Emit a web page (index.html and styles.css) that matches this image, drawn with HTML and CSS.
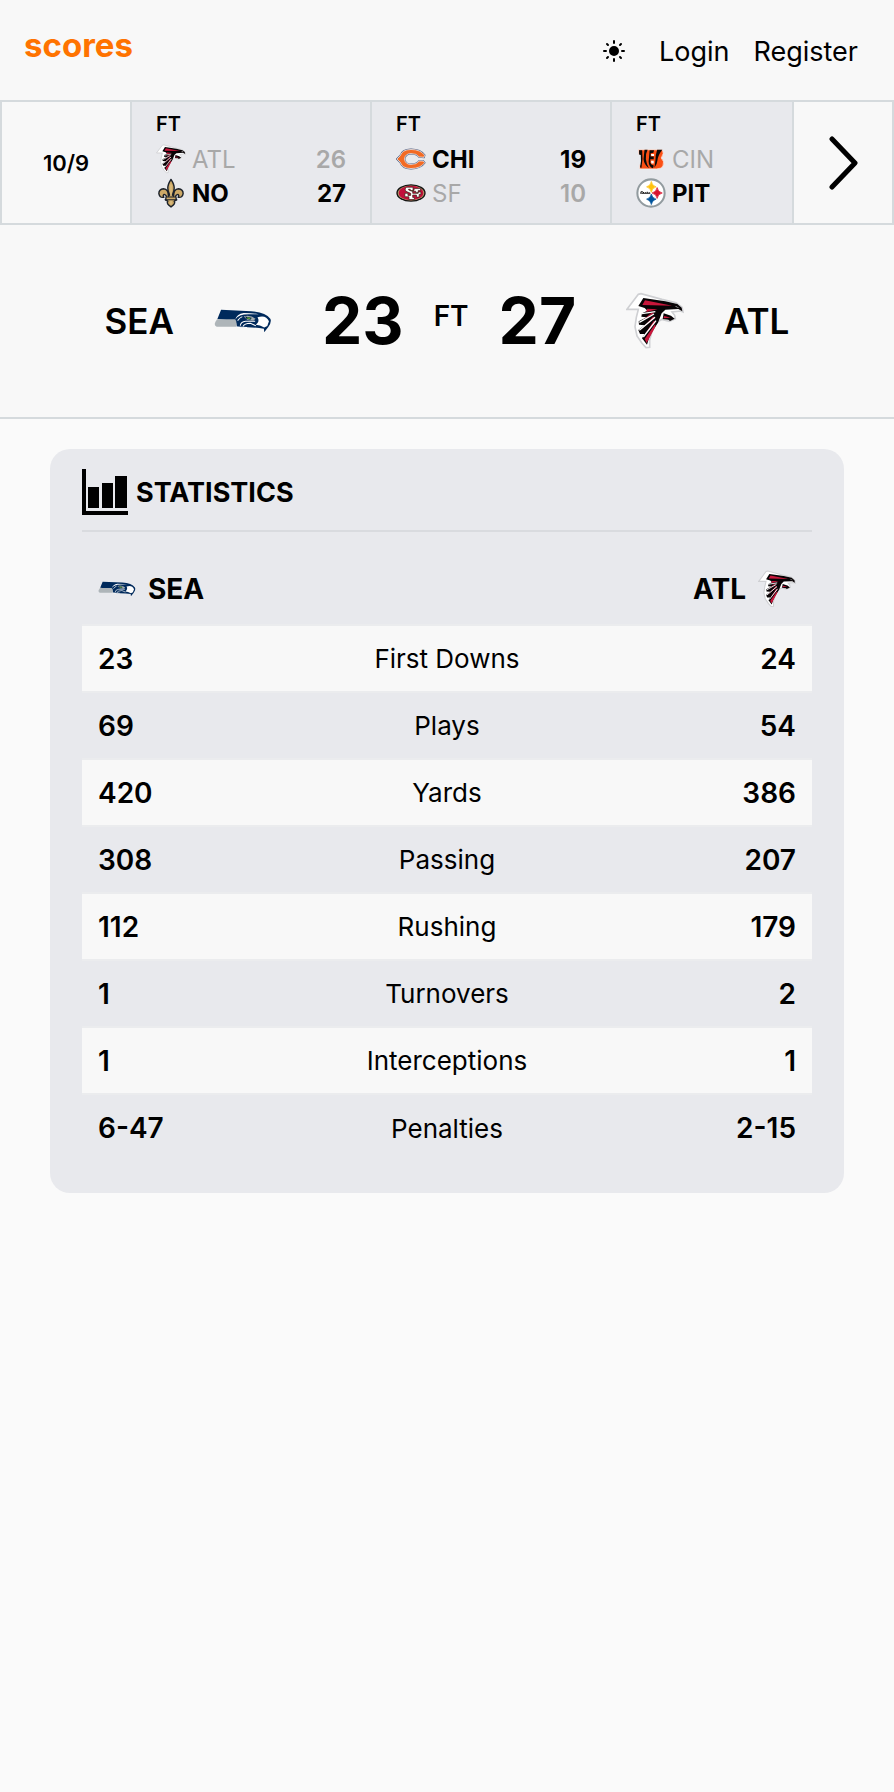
FILE: index.html
```html
<!DOCTYPE html>
<html lang="en">
<head>
<meta charset="utf-8">
<meta name="viewport" content="width=device-width, initial-scale=1">
<title>scores</title>
<link rel="stylesheet" href="styles.css">
</head>
<body>
<svg class="defs" aria-hidden="true">
  <symbol id="falcons" viewBox="20 18 174 170">
    <path d="M23 68 57 23 65 21 128 38 170 48 188 62 191 76 184 73 158 76 166 86 168 96 150 104 128 98 112 108 98 134 91 160 91 182 80 183 68 170 53 148 47 120 51 92 57 68Z" fill="#fff" stroke="#cfd0d3" stroke-width="5"/>
    <path d="M72 34 138 44 174 52 187 63 189 74 177 67 138 69 127 80 116 108 99 134 89 154 83 174 68 155 76 142 62 142 57 130 76 116 59 114 58 104 82 92 66 90 68 80 84 72 76 64 57 58Z" fill="#080406"/>
    <path d="m77 41 82 16-90-2ZM83 66l32 2-34 8ZM97 78l8 0-38 25ZM101 90l7 1-43 38ZM103 103l6 2-33 39ZM107 113l2 6-27 50-6-12Z" fill="#c8173b"/>
    <path d="M68 81 108 75M60 107 104 82M60 131 107 92M72 151 110 102" stroke="#fff" stroke-width="4"/>
    <path d="m133 80 22 7 11 9-14 7-5-4-17-2Z" fill="#080406"/>
    <path d="m135 88 19 5-22 2Z" fill="#c8173b"/>
    <path d="m166 57 14 6-8-1Z" fill="#fff"/>
  </symbol>
  <symbol id="seahawks" viewBox="402 113 172 74">
    <path d="M423 117 512 121Q555 124 569 143 574 152 563 168L551 183 550 173Q525 168 490 169L470 167 466 150 412 144Z" fill="#002a5c"/>
    <path d="M411 145 464 145Q471 149 468 167L410 167Q401 163 406 153Z" fill="#aeb5b9"/>
    <path d="M465 146Q475 128 512 130L535 130Q514 126 490 126 469 129 465 146Z" fill="#fff"/>
    <path d="M531 139Q556 130 565 151L560 165 551 169Q538 162 526 161 539 151 531 139Z" fill="#fff"/>
    <path d="M472 149Q479 139 486 137M480 164Q481 153 496 151L524 151M488 166Q492 158 510 157L526 164M470 168 500 169" fill="none" stroke="#fff" stroke-width="3"/>
    <path d="M490 136Q510 131 525 143L519 149 501 147Z" fill="#a5acaf"/>
    <path d="m494 137 20 3-4 6-11-2Z" fill="#002244"/>
    <path d="m500 139 11 2-3 3-7-1Z" fill="#62b22f"/>
  </symbol>
  <symbol id="saints" viewBox="0 0 76 84">
    <g stroke="#1c222b" stroke-width="4" stroke-linejoin="round" fill="#cda967">
      <path d="M38 4Q29 18 29 28 29 36 34 47L31 51Q31 31 17 30 4 31 4 44 6 56 18 54 14 49 19 46 27 48 25 57L22 61 29 65Q24 72 38 81 52 72 47 65L54 61 51 57Q49 48 57 46 62 49 58 54 70 56 72 44 72 31 59 30 45 31 45 51L42 47Q47 36 47 28 47 18 38 4Z"/>
      <path d="M24 53H52V61H24Z" stroke-width="3"/>
    </g>
    <path d="M38 18V48M38 64V74" stroke="#e2c78c" stroke-width="3"/>
  </symbol>
  <symbol id="bears" viewBox="0 0 88 64">
    <path d="M84 21Q72 4 44 4 18 4 12 23L3 32 12 41Q18 60 44 60 72 60 84 43L80 38 68 38Q61 48 44 48 27 48 25 32 27 16 44 16 61 16 68 26L82 27Z" fill="#f26a24" stroke="#4b587b" stroke-width="5"/>
    <path d="M84 21Q72 4 44 4 18 4 12 23L3 32 12 41Q18 60 44 60 72 60 84 43L80 38 68 38Q61 48 44 48 27 48 25 32 27 16 44 16 61 16 68 26L82 27Z" fill="#f26a24" stroke="#fff" stroke-width="2"/>
  </symbol>
  <symbol id="niners" viewBox="0 0 88 54">
    <ellipse cx="44" cy="27" rx="43" ry="26" fill="#111"/>
    <ellipse cx="44" cy="27" rx="39" ry="22" fill="#b49b69"/>
    <ellipse cx="44" cy="27" rx="36" ry="21" fill="#c20f3c"/>
    <path d="M50 10H30Q24 15 29 22L43 28V34H35V28H26V38H38V46H54V40H49V33H60V39H68V31H73V24H65V28H49V22H58V26H65V20H72V14H53V19L48 22 37 18V16H42V20H50Z" fill="#fff" stroke="#321" stroke-width="2"/>
  </symbol>
  <symbol id="bengals" viewBox="-4 0 88 62">
    <path d="M3 4H73Q80 14 70 28 81 38 75 52 70 60 56 60H7V48H11V17H4Z" fill="#fb4f14" stroke="#f7f2ef" stroke-width="2"/>
    <path d="M5 5 14 5Q17 28 12 57L8 56Q12 34 10 19L5 18ZM21 4H30Q23 17 25 32 27 48 34 58 20 49 18 32ZM36 5H49L47 13 39 14V24H48V32H38V42Q40 49 48 50L46 58Q34 55 33 39ZM58 4H73Q60 21 59 35 58 47 50 57L53 35Q53 19 58 4Z" fill="#0a0a0a"/>
    <path d="M40 16H49V22H41ZM40 36H48V44H41Z" fill="#fff"/>
  </symbol>
  <symbol id="steelers" viewBox="0 0 88 88">
    <circle cx="44" cy="44" r="40" fill="#fff" stroke="#929b9f" stroke-width="6"/>
    <path d="M45 10Q47 23 59 26 47 29 45 42 43 29 31 26 43 23 45 10Z" fill="#ffc20e" stroke="#ffc20e" stroke-width="2"/>
    <path d="M62 28Q64 41 77 44 64 47 62 60 60 47 47 44 60 41 62 28Z" fill="#d8142f" stroke="#d8142f" stroke-width="2"/>
    <path d="M45 47Q47 59 59 62 47 65 45 78 43 65 31 62 43 59 45 47Z" fill="#00539b" stroke="#00539b" stroke-width="2"/>
    <path d="M14 40H20M16 45H42M14 42V46M22 41V46M28 42V46M33 40V46M39 42V46" stroke="#111" stroke-width="3"/>
  </symbol>
</svg>

<header class="site-header">
  <a class="brand" href="#">scores</a>
  <nav class="site-nav">
    <button class="theme-toggle" type="button" aria-label="Toggle theme">
      <svg class="sun" viewBox="0 0 22 22"><circle cx="11" cy="11" r="4"/><path d="M11 1V3M11 19V21M1 11H3M19 11H21M4 4 5 5M17 17 18 18M4 18 5 17M17 5 18 4"/></svg>
    </button>
    <a href="#">Login</a>
    <a href="#">Register</a>
  </nav>
</header>

<section class="ticker">
  <div class="ticker-date">10/9</div>
  <div class="ticker-games">
    <a class="game" href="#">
      <span class="game-status">FT</span>
      <span class="game-team loser"><svg class="game-logo"><use href="#falcons"/></svg><span class="game-name">ATL</span><span class="game-score">26</span></span>
      <span class="game-team"><svg class="game-logo"><use href="#saints"/></svg><span class="game-name">NO</span><span class="game-score">27</span></span>
    </a>
    <a class="game" href="#">
      <span class="game-status">FT</span>
      <span class="game-team"><svg class="game-logo"><use href="#bears"/></svg><span class="game-name">CHI</span><span class="game-score">19</span></span>
      <span class="game-team loser"><svg class="game-logo"><use href="#niners"/></svg><span class="game-name">SF</span><span class="game-score">10</span></span>
    </a>
    <a class="game" href="#">
      <span class="game-status">FT</span>
      <span class="game-team loser"><svg class="game-logo"><use href="#bengals"/></svg><span class="game-name">CIN</span></span>
      <span class="game-team"><svg class="game-logo"><use href="#steelers"/></svg><span class="game-name">PIT</span></span>
    </a>
  </div>
  <button class="ticker-next" type="button" aria-label="Next games">
    <svg class="chevron" viewBox="0 0 30 54"><path d="M4 3 27 27 4 51"/></svg>
  </button>
</section>

<section class="scoreboard">
  <div class="side"><span class="side-name">SEA</span><svg class="side-logo"><use href="#seahawks"/></svg></div>
  <div class="result">
    <strong class="side-score">23</strong>
    <span class="match-status">FT</span>
    <strong class="side-score">27</strong>
  </div>
  <div class="side"><svg class="side-logo"><use href="#falcons"/></svg><span class="side-name">ATL</span></div>
</section>

<main class="content">
  <section class="card">
    <h2 class="card-title">
      <svg class="chart-icon" viewBox="0 0 46 46"><path d="M0 0H4V42H46V46H0ZM6 18H17V39H6ZM20 14H31V39H20ZM33 7H45V39H33Z"/></svg>
      STATISTICS
    </h2>
    <table class="stats">
      <thead>
        <tr>
          <th scope="col"><span class="team"><svg class="team-logo"><use href="#seahawks"/></svg>SEA</span></th>
          <td></td>
          <th scope="col"><span class="team team-away">ATL<svg class="team-logo"><use href="#falcons"/></svg></span></th>
        </tr>
      </thead>
      <tbody>
        <tr><td>23</td><th scope="row">First Downs</th><td>24</td></tr>
        <tr><td>69</td><th scope="row">Plays</th><td>54</td></tr>
        <tr><td>420</td><th scope="row">Yards</th><td>386</td></tr>
        <tr><td>308</td><th scope="row">Passing</th><td>207</td></tr>
        <tr><td>112</td><th scope="row">Rushing</th><td>179</td></tr>
        <tr><td>1</td><th scope="row">Turnovers</th><td>2</td></tr>
        <tr><td>1</td><th scope="row">Interceptions</th><td>1</td></tr>
        <tr><td>6-47</td><th scope="row">Penalties</th><td>2-15</td></tr>
      </tbody>
    </table>
  </section>
</main>
</body>
</html>
```
FILE: styles.css
```css
* { box-sizing: border-box; }

body {
  margin: 0;
  background: #fafafa;
  color: #000;
  font-family: Inter, "Liberation Sans", sans-serif;
}

a { color: inherit; text-decoration: none; }

button {
  border: 0;
  padding: 0;
  background: none;
  color: inherit;
  cursor: pointer;
}

.defs { display: none; }

/* Header */
.site-header {
  display: flex;
  justify-content: space-between;
  align-items: center;
  height: 100px;
  padding: 0 36px 0 24px;
  background: #f8f8f8;
}

.brand {
  padding-bottom: 10px;
  color: #ff7300;
  font-size: 33px;
  font-weight: 700;
}

.site-nav {
  display: flex;
  align-items: center;
  gap: 24px;
  padding-top: 2px;
  font-size: 27px;
}

.theme-toggle { margin-right: 10px; }

.sun {
  display: block;
  width: 22px;
  height: 22px;
  stroke: #000;
  stroke-width: 2;
  stroke-linecap: round;
}

/* Ticker */
.ticker {
  display: flex;
  height: 125px;
  border: 2px solid #d5dadd;
  background: #f8f8f8;
}

.ticker-date {
  display: flex;
  flex: none;
  align-items: center;
  justify-content: center;
  width: 128px;
  font-size: 22px;
  font-weight: 600;
}

.ticker-games {
  display: flex;
  flex: 1;
  min-width: 0;
  overflow: hidden;
  background: #e8e9ed;
}

.game {
  flex: none;
  width: 240px;
  padding: 10px 24px 0;
  border-left: 2px solid #d5dadd;
}

.game-status {
  display: block;
  height: 30px;
  font-size: 20px;
  font-weight: 600;
  line-height: 24px;
}

.game-team {
  display: flex;
  align-items: center;
  gap: 6px;
  height: 34px;
  font-size: 24px;
  font-weight: 700;
}

.game-logo { width: 30px; height: 30px; }
.game-score { margin-left: auto; }

.loser { color: #a8a8a8; }
.loser .game-name { font-weight: 400; }
.loser .game-score { font-weight: 600; }

.ticker-next {
  display: flex;
  flex: none;
  align-items: center;
  justify-content: center;
  width: 98px;
  border-left: 2px solid #d5dadd;
}

.ticker-next { width: 100px; }

.chevron {
  width: 30px;
  height: 54px;
  fill: none;
  stroke: #000;
  stroke-width: 5;
  stroke-linecap: round;
  stroke-linejoin: round;
}

/* Scoreboard */
.scoreboard {
  display: flex;
  align-items: center;
  justify-content: center;
  gap: 50px;
  padding: 57px 32px 58px;
  border-bottom: 2px solid #d5dadd;
  background: #f8f8f8;
}

.side { display: flex; align-items: center; gap: 40px; }
.side-name { font-size: 35px; font-weight: 600; }
.side-logo { width: 58px; height: 58px; }

.result { display: flex; align-items: center; gap: 30px; }
.side-score { font-size: 64px; font-weight: 700; }
.match-status { padding-bottom: 10px; font-size: 28px; font-weight: 600; }

/* Statistics */
.content { padding: 30px 50px; }

.card {
  padding: 20px 32px 32px;
  border-radius: 20px;
  background: #e8e9ed;
}

.card-title {
  display: flex;
  align-items: center;
  gap: 8px;
  margin: 0;
  padding-bottom: 15px;
  border-bottom: 2px solid #d9dbdf;
  font-size: 27px;
  font-weight: 700;
}

.chart-icon { width: 46px; height: 46px; }

.stats {
  width: 100%;
  table-layout: fixed;
  border-collapse: collapse;
  font-size: 28px;
  font-weight: 600;
  text-align: center;
}

.stats th,
.stats td {
  height: 67px;
  padding: 0 16px;
  border-bottom: 2px solid #ebecee;
}

.stats th:first-child,
.stats td:first-child { text-align: left; }

.stats th:last-child,
.stats td:last-child { text-align: right; }

.stats thead th,
.stats thead td { height: 93px; vertical-align: bottom; }

.stats tbody th { padding: 0; font-size: 26px; font-weight: 400; }

.stats tbody tr:nth-child(odd) { background: #f8f8f8; }

.stats tbody tr:last-child > * { border-bottom: 0; }

.team { display: flex; align-items: center; gap: 12px; height: 70px; }
.team-away { justify-content: flex-end; }
.team-logo { width: 38px; height: 38px; }
```
